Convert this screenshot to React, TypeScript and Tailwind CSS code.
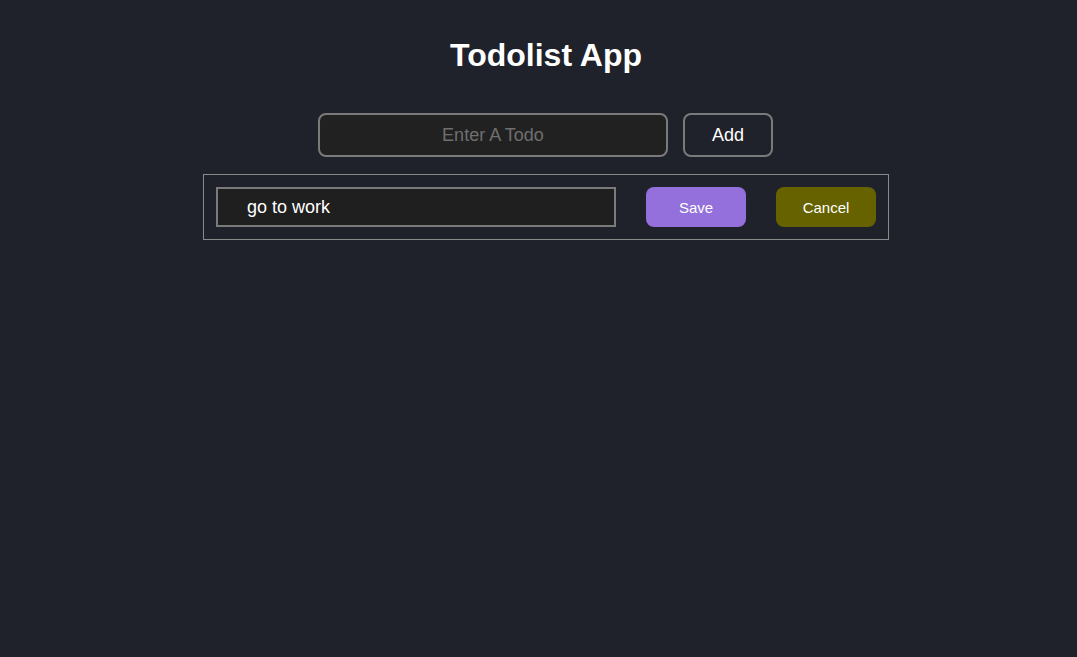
import { useEffect, useRef, useState } from 'react';

const App = () => {
  const [todo, setTodo] = useState('');
  const [editText, setEditText] = useState('go to work');
  const editRef = useRef<HTMLInputElement>(null);

  useEffect(() => {
    // Put the caret at the end of the todo being edited
    const el = editRef.current;
    if (el) {
      el.focus();
      el.setSelectionRange(el.value.length, el.value.length);
    }
  }, []);

  return (
    <div
      className="min-h-screen bg-[#1f222a] pl-[15px] text-white"
      style={{ fontFamily: '"Liberation Sans", Arial, sans-serif' }}
    >
      <div className="flex flex-col items-center pt-[37px]">
        <h1 className="text-[32px] font-bold leading-[37px]">Todolist App</h1>

        {/* Add form */}
        <div className="mt-[39px] mr-px flex gap-[15px]">
          <input
            value={todo}
            onChange={(e) => setTodo(e.target.value)}
            placeholder="Enter A Todo"
            className="h-[44px] w-[350px] rounded-lg border-2 border-[#7a7a7a] bg-[#212121] text-center text-[18px] text-white outline-none placeholder:text-[#6f6f6f]"
          />
          <button className="h-[44px] w-[90px] rounded-lg border-2 border-[#7a7a7a] text-[18px] text-white">
            Add
          </button>
        </div>

        {/* Editing row */}
        <div className="mt-[17px] flex w-[686px] items-center gap-[30px] border border-[#8a8a8a] p-3">
          <input
            ref={editRef}
            value={editText}
            onChange={(e) => setEditText(e.target.value)}
            className="h-[40px] w-[400px] border-2 border-[#7a7a7a] bg-[#1f1f1f] pl-[29px] text-[18px] text-white caret-white outline-none"
          />
          <button className="h-[40px] w-[100px] rounded-lg bg-[#9370db] pt-[2px] text-[15px] text-white">
            Save
          </button>
          <button className="h-[40px] w-[100px] rounded-lg bg-[#666200] pt-[2px] text-[15px] text-white">
            Cancel
          </button>
        </div>
      </div>
    </div>
  );
};

export default App;
